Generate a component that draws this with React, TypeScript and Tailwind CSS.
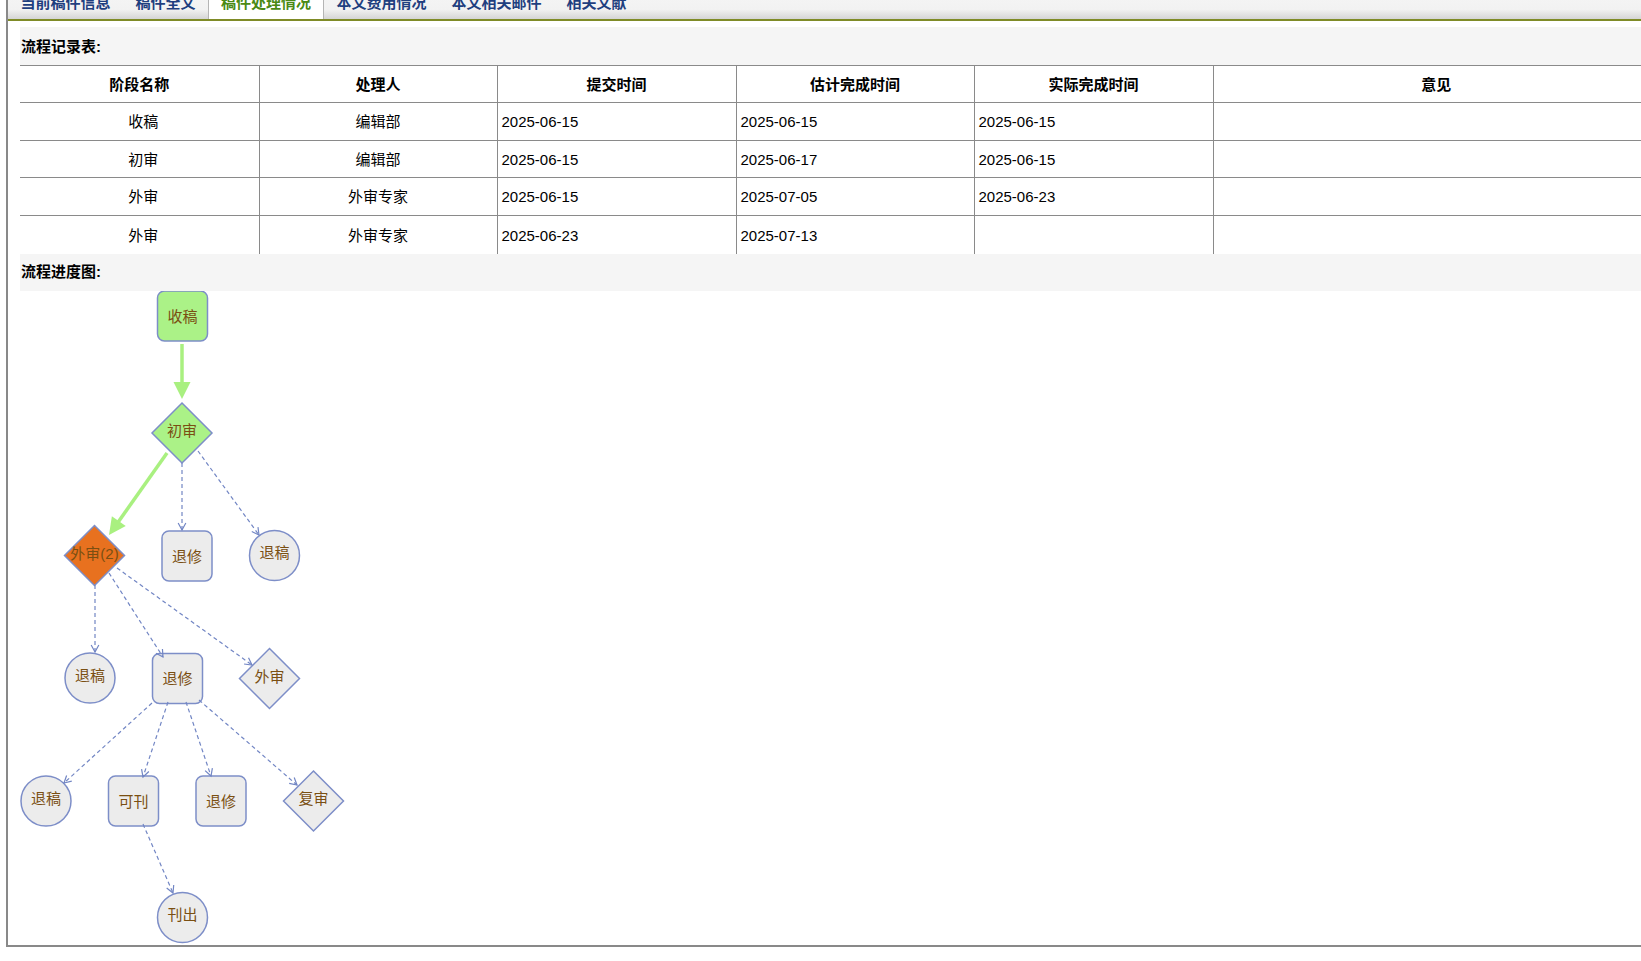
import React from 'react';

const tabs = ['当前稿件信息', '稿件全文', '稿件处理情况', '本文费用情况', '本文相关邮件', '相关文献'];

const rows = [
  { stage: '收稿', who: '编辑部', submit: '2025-06-15', plan: '2025-06-15', done: '2025-06-15' },
  { stage: '初审', who: '编辑部', submit: '2025-06-15', plan: '2025-06-17', done: '2025-06-15' },
  { stage: '外审', who: '外审专家', submit: '2025-06-15', plan: '2025-07-05', done: '2025-06-23' },
  { stage: '外审', who: '外审专家', submit: '2025-06-23', plan: '2025-07-13', done: '' },
];
const rowH = ['h-[38px]', 'h-[37px]', 'h-[38px]', 'h-[38px]'];

const STROKE = '#7d8ec8';
const EDGE = '#7286c4';
const TXT = '#7a4f12';
const GREEN = '#abf287';
const GRAY = '#ececec';

type Node = { kind: 'rect' | 'diamond' | 'circle'; x: number; y: number; label: string; fill: string };

// 流程图节点，坐标按页面像素
const nodes: Node[] = [
  { kind: 'rect', x: 182.5, y: 315, label: '收稿', fill: GREEN },
  { kind: 'diamond', x: 182, y: 432, label: '初审', fill: GREEN },
  { kind: 'diamond', x: 94.5, y: 554.5, label: '外审(2)', fill: '#e8711f' },
  { kind: 'rect', x: 187, y: 555, label: '退修', fill: GRAY },
  { kind: 'circle', x: 274.5, y: 554.5, label: '退稿', fill: GRAY },
  { kind: 'circle', x: 90, y: 677, label: '退稿', fill: GRAY },
  { kind: 'rect', x: 177.5, y: 677.5, label: '退修', fill: GRAY },
  { kind: 'diamond', x: 269.5, y: 677.5, label: '外审', fill: GRAY },
  { kind: 'circle', x: 46, y: 800, label: '退稿', fill: GRAY },
  { kind: 'rect', x: 133.5, y: 800, label: '可刊', fill: GRAY },
  { kind: 'rect', x: 221, y: 800, label: '退修', fill: GRAY },
  { kind: 'diamond', x: 313.5, y: 800, label: '复审', fill: GRAY },
  { kind: 'circle', x: 182.5, y: 916.5, label: '刊出', fill: GRAY },
];

const dashed: [number, number, number, number][] = [
  [182, 462, 182, 529],
  [198, 450, 259, 534],
  [95, 584, 95, 651],
  [109, 572, 163, 656],
  [117, 567, 252, 664],
  [152, 702, 64, 782],
  [168, 701, 143, 776],
  [186, 701, 211, 775],
  [199, 699, 297, 784],
  [143, 823, 173, 892],
];

const solid: [number, number, number, number][] = [
  [182, 343, 182, 398],
  [167, 452, 109, 534],
];

function unit(x1: number, y1: number, x2: number, y2: number) {
  const dx = x2 - x1;
  const dy = y2 - y1;
  const l = Math.hypot(dx, dy);
  return [dx / l, dy / l];
}

function NodeShape({ n }: { n: Node }) {
  let shape;
  let dy = 0;
  if (n.kind === 'rect') {
    shape = <rect x={n.x - 25} y={n.y - 25} width={50} height={50} rx={7} fill={n.fill} stroke={STROKE} strokeWidth={1.5} />;
  } else if (n.kind === 'circle') {
    dy = -3;
    shape = <circle cx={n.x} cy={n.y} r={25} fill={n.fill} stroke={STROKE} strokeWidth={1.5} />;
  } else {
    dy = -2.5;
    const p = `${n.x},${n.y - 30} ${n.x + 30},${n.y} ${n.x},${n.y + 30} ${n.x - 30},${n.y}`;
    shape = <polygon points={p} fill={n.fill} stroke={STROKE} strokeWidth={1.5} />;
  }
  return (
    <g>
      {shape}
      <text
        x={n.x}
        y={n.y + dy}
        textAnchor="middle"
        dominantBaseline="central"
        fontSize={15}
        fill={TXT}
        fontFamily="'Liberation Sans','Noto Sans CJK SC',sans-serif"
      >
        {n.label}
      </text>
    </g>
  );
}

function DashedArrow({ e }: { e: [number, number, number, number] }) {
  const [x1, y1, x2, y2] = e;
  const [ux, uy] = unit(x1, y1, x2, y2);
  const len = 8;
  const a = 0.5;
  const c = Math.cos(a);
  const s = Math.sin(a);
  // 两条斜线组成的空心箭头
  const l1x = x2 - len * (ux * c - uy * s);
  const l1y = y2 - len * (uy * c + ux * s);
  const l2x = x2 - len * (ux * c + uy * s);
  const l2y = y2 - len * (uy * c - ux * s);
  return (
    <g stroke={EDGE} strokeWidth={1.2} fill="none">
      <line x1={x1} y1={y1} x2={x2} y2={y2} strokeDasharray="4 3" />
      <polyline points={`${l1x},${l1y} ${x2},${y2} ${l2x},${l2y}`} />
    </g>
  );
}

function SolidArrow({ e }: { e: [number, number, number, number] }) {
  const [x1, y1, x2, y2] = e;
  const [ux, uy] = unit(x1, y1, x2, y2);
  const len = 17;
  const half = 8.5;
  const bx = x2 - ux * len;
  const by = y2 - uy * len;
  return (
    <g>
      <line x1={x1} y1={y1} x2={bx + ux} y2={by + uy} stroke="#a9f080" strokeWidth={3.5} />
      <polygon
        points={`${x2},${y2} ${bx - uy * half},${by + ux * half} ${bx + uy * half},${by - ux * half}`}
        fill="#a9f080"
      />
    </g>
  );
}

export default function App() {
  return (
    <div className="h-screen w-full overflow-hidden bg-white font-['Liberation_Sans','Noto_Sans_CJK_SC',sans-serif] text-[15px] text-black">
      <div className="ml-[6px] w-[1700px] border-b-2 border-l-2 border-[#898989]">
        {/* 选项卡 */}
        <div className="-mt-[13px] flex h-[32px] bg-linear-to-b from-[#f6f6f6] via-[#f2f2f2] via-70% to-[#d5d5d5]">
          {tabs.map((t, i) =>
            i === 2 ? (
              <div
                key={t}
                className="flex items-center border-x border-[#b5b5b5] bg-white px-[12px] font-bold text-[#4a8a14]"
              >
                {t}
              </div>
            ) : (
              <div key={t} className="flex items-center px-[12.5px] font-bold text-[#1f3f7f]">
                {t}
              </div>
            )
          )}
        </div>
        <div className="h-[2px] bg-[#7f8b27]" />

        <div className="pl-[12px] pt-[6px]">
          <div className="flex h-[38px] items-center bg-[#f5f5f5] pl-[1px] pt-[2px] font-bold">流程记录表:</div>

          <table className="w-[1639px] table-fixed border-collapse bg-white">
            <colgroup>
              <col className="w-[239px]" />
              <col className="w-[238px]" />
              <col className="w-[239px]" />
              <col className="w-[238px]" />
              <col className="w-[239px]" />
              <col />
            </colgroup>
            <thead>
              <tr className="h-[37px]">
                {['阶段名称', '处理人', '提交时间', '估计完成时间', '实际完成时间', '意见'].map((h, i) => (
                  <th
                    key={h}
                    className={`border-t border-[#8a8a8a] p-0 pt-[2px] text-center font-bold ${i < 5 ? 'border-r' : ''}`}
                  >
                    {h}
                  </th>
                ))}
              </tr>
            </thead>
            <tbody>
              {rows.map((r, i) => (
                <tr key={i} className={rowH[i]}>
                  <td className="border-t border-r border-[#8a8a8a] p-0 pl-[8px] pt-[2px] text-center">{r.stage}</td>
                  <td className="border-t border-r border-[#8a8a8a] p-0 pt-[2px] text-center">{r.who}</td>
                  <td className="border-t border-r border-[#8a8a8a] p-0 pl-[4px] pt-[2px]">{r.submit}</td>
                  <td className="border-t border-r border-[#8a8a8a] p-0 pl-[4px] pt-[2px]">{r.plan}</td>
                  <td className="border-t border-r border-[#8a8a8a] p-0 pl-[4px] pt-[2px]">{r.done}</td>
                  <td className="border-t border-[#8a8a8a] p-0" />
                </tr>
              ))}
            </tbody>
          </table>

          <div className="flex h-[37px] items-center bg-[#f5f5f5] pl-[1px] font-bold">流程进度图:</div>

          <svg width={400} height={654} viewBox="20 290 400 654" className="block">
            {nodes.map((n, i) => (
              <NodeShape key={i} n={n} />
            ))}
            {solid.map((e, i) => (
              <SolidArrow key={i} e={e} />
            ))}
            {dashed.map((e, i) => (
              <DashedArrow key={i} e={e} />
            ))}
          </svg>
        </div>
      </div>
    </div>
  );
}
